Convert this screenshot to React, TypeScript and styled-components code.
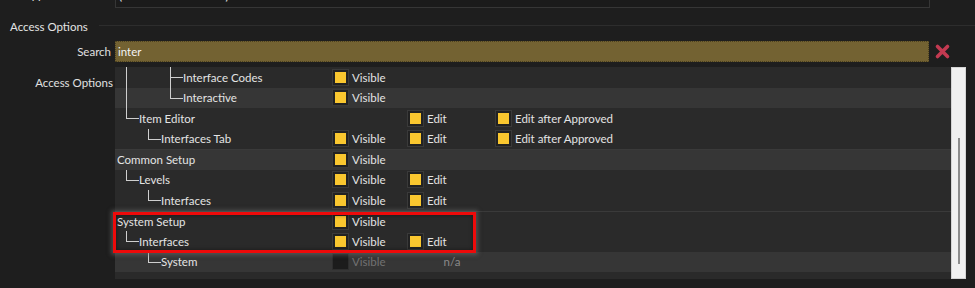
import React from 'react';
import styled, { createGlobalStyle, css } from 'styled-components';

const Global = createGlobalStyle`
  html, body { margin: 0; padding: 0; background: #1e1e1e; }
  body {
    font-family: Lato, "Noto Sans", sans-serif;
    font-size: 11.5px;
    color: #e4e4e4;
    overflow: hidden;
  }
`;

const Page = styled.div`
  width: 975px;
  height: 288px;
  overflow: hidden;
  background: #1e1e1e;
`;

const Form = styled.div`
  margin-top: -13px;
  display: flex;
  flex-direction: column;
`;

const FieldRow = styled.div<{ $mt?: number }>`
  display: grid;
  grid-template-columns: 115px auto;
  align-items: start;
  margin-top: ${(p) => p.$mt ?? 0}px;
`;

const Label = styled.div<{ $pt?: number; $pr?: number; $lh?: number }>`
  text-align: right;
  white-space: nowrap;
  padding-top: ${(p) => p.$pt ?? 0}px;
  padding-right: ${(p) => p.$pr ?? 4}px;
  line-height: ${(p) => p.$lh ?? 21}px;
  color: #e0e0e0;
`;

const StoreInput = styled.div`
  box-sizing: border-box;
  width: 815px;
  height: 21px;
  line-height: 16px;
  padding-left: 3px;
  background: #1b1b1b;
  border: 1px solid #363636;
  color: #e8e8e8;
`;

const SectionHeader = styled.div`
  display: flex;
  align-items: flex-start;
  margin-top: 12px;
  padding-left: 10px;
  gap: 11px;
`;

const SectionTitle = styled.div`
  line-height: 14px;
  color: #e4e4e4;
`;

const SectionRule = styled.div`
  flex: 1;
  height: 1px;
  margin-top: 5px;
  background: #2d2d2d;
`;

const SearchWrap = styled.div`
  display: flex;
  align-items: center;
  gap: 5px;
`;

const SearchInput = styled.div`
  box-sizing: border-box;
  width: 814px;
  height: 21px;
  line-height: 19px;
  padding-left: 2px;
  background: #736232;
  border: 1px dotted #4c411f;
  color: #f4f4f4;
`;

const ClearButton = styled.div`
  width: 17px;
  height: 17px;
  display: flex;
  align-items: center;
  justify-content: center;
`;

const TreeBox = styled.div`
  display: flex;
  width: 851px;
`;

const TreeContent = styled.div`
  position: relative;
  width: 836px;
  background: #2a2a2a;
  padding-bottom: 7px;
`;

const Scrollbar = styled.div`
  box-sizing: border-box;
  width: 15px;
  background: #f0f0f0;
  border: 1px solid #d4d4d4;
  padding-top: 70px;
  display: flex;
  justify-content: center;
`;

const ScrollThumb = styled.div`
  width: 2px;
  height: 126px;
  background: #8c8c8c;
`;

const Row = styled.div<{ $light?: boolean; $sep?: boolean }>`
  box-sizing: border-box;
  height: 20.5px;
  display: flex;
  align-items: center;
  background: ${(p) => (p.$light ? '#363636' : '#2a2a2a')};
  ${(p) =>
    p.$sep &&
    css`
      border-top: 1px solid #3a3a3a;
    `}
`;

const TreeCell = styled.div`
  width: 218px;
  height: 100%;
  box-sizing: border-box;
  padding-left: 2px;
  display: flex;
  align-items: stretch;
`;

type GuideKind = 'none' | 'pipe' | 'elbow' | 'tee';

const Guide = styled.div<{ $kind: GuideKind }>`
  position: relative;
  width: 22px;
  flex: none;
  &::before,
  &::after {
    content: '';
    position: absolute;
    background: #cfcfcf;
    display: none;
  }
  &::before {
    left: 9px;
    top: 0;
    width: 1px;
  }
  &::after {
    left: 9px;
    top: 50%;
    width: 13px;
    height: 1px;
  }
  ${(p) =>
    p.$kind === 'pipe' &&
    css`
      &::before { display: block; bottom: 0; }
    `}
  ${(p) =>
    p.$kind === 'tee' &&
    css`
      &::before { display: block; bottom: 0; }
      &::after { display: block; }
    `}
  ${(p) =>
    p.$kind === 'elbow' &&
    css`
      &::before { display: block; height: 50%; }
      &::after { display: block; }
    `}
`;

const NodeLabel = styled.div`
  display: flex;
  align-items: center;
  white-space: nowrap;
  color: #e4e4e4;
`;

const PermCell = styled.div<{ $w: number }>`
  width: ${(p) => p.$w}px;
  flex: none;
  display: flex;
  align-items: center;
  gap: 4px;
  white-space: nowrap;
`;

const Check = styled.div<{ $disabled?: boolean }>`
  width: 11px;
  height: 11px;
  flex: none;
  border: 2px solid ${(p) => (p.$disabled ? '#1c1c1c' : '#222222')};
  background: ${(p) => (p.$disabled ? '#1c1c1c' : '#fac72f')};
  box-shadow: 0 0 0 1px ${(p) => (p.$disabled ? '#2e2e2e' : '#3a3a3a')};
`;

const PermText = styled.span<{ $disabled?: boolean }>`
  color: ${(p) => (p.$disabled ? '#727272' : '#e4e4e4')};
`;

const NotApplicable = styled.div`
  width: 88px;
  text-align: center;
  color: #8a8a8a;
`;

const Highlight = styled.div`
  position: absolute;
  left: -2px;
  top: 145px;
  width: 363px;
  height: 41px;
  box-sizing: border-box;
  border: 3px solid #ee0a0a;
  box-shadow: 0 0 4px 2px rgba(110, 110, 110, 0.55), inset 0 0 4px rgba(0, 0, 0, 0.45);
  pointer-events: none;
`;

type Perm = 'visible' | 'edit' | 'approved' | 'empty' | 'visibleOff' | 'na';

type Node = {
  label: string;
  guides: GuideKind[];
  perms: Perm[];
  light?: boolean;
  sep?: boolean;
};

const nodes: Node[] = [
  { label: 'Interface Codes', guides: ['pipe', 'none', 'tee'], perms: ['visible'] },
  { label: 'Interactive', guides: ['pipe', 'none', 'elbow'], perms: ['visible'], light: true },
  { label: 'Item Editor', guides: ['elbow'], perms: ['empty', 'edit', 'approved'] },
  { label: 'Interfaces Tab', guides: ['none', 'elbow'], perms: ['visible', 'edit', 'approved'] },
  { label: 'Common Setup', guides: [], perms: ['visible'], light: true, sep: true },
  { label: 'Levels', guides: ['elbow'], perms: ['visible', 'edit'] },
  { label: 'Interfaces', guides: ['none', 'elbow'], perms: ['visible', 'edit'] },
  { label: 'System Setup', guides: [], perms: ['visible'], sep: true },
  { label: 'Interfaces', guides: ['elbow'], perms: ['visible', 'edit'] },
  { label: 'System', guides: ['none', 'elbow'], perms: ['visibleOff', 'na'], light: true },
];

const widths = [75, 88, 130];

const PermView = ({ perm, w }: { perm: Perm; w: number }) => {
  switch (perm) {
    case 'empty':
      return <PermCell $w={w} />;
    case 'na':
      return <NotApplicable>n/a</NotApplicable>;
    case 'visibleOff':
      return (
        <PermCell $w={w}>
          <Check $disabled />
          <PermText $disabled>Visible</PermText>
        </PermCell>
      );
    default: {
      const text = perm === 'visible' ? 'Visible' : perm === 'edit' ? 'Edit' : 'Edit after Approved';
      return (
        <PermCell $w={w}>
          <Check />
          <PermText>{text}</PermText>
        </PermCell>
      );
    }
  }
};

const ClearIcon = () => (
  <svg width="17" height="17" viewBox="0 0 17 17">
    <path d="M3.5 3.5 L13.5 13.5 M13.5 3.5 L3.5 13.5" stroke="#c33a51" strokeWidth="3.6" strokeLinecap="round" />
  </svg>
);

export default function App() {
  return (
    <Page>
      <Global />
      <Form>
        <FieldRow>
          <Label $lh={16}>Applicable Stores</Label>
          <StoreInput>(All 7 Stores Selected)</StoreInput>
        </FieldRow>

        <SectionHeader>
          <SectionTitle>Access Options</SectionTitle>
          <SectionRule />
        </SectionHeader>

        <FieldRow $mt={7}>
          <Label>Search</Label>
          <SearchWrap>
            <SearchInput>inter</SearchInput>
            <ClearButton>
              <ClearIcon />
            </ClearButton>
          </SearchWrap>
        </FieldRow>

        <FieldRow $mt={5}>
          <Label $pt={8} $pr={2} $lh={16}>Access Options</Label>
          <TreeBox>
            <TreeContent>
              {nodes.map((n, i) => (
                <Row key={i} $light={n.light} $sep={n.sep}>
                  <TreeCell>
                    {n.guides.map((g, j) => (
                      <Guide key={j} $kind={g} />
                    ))}
                    <NodeLabel>{n.label}</NodeLabel>
                  </TreeCell>
                  {n.perms.map((p, j) => (
                    <PermView key={j} perm={p} w={widths[j]} />
                  ))}
                </Row>
              ))}
              <Highlight />
            </TreeContent>
            <Scrollbar>
              <ScrollThumb />
            </Scrollbar>
          </TreeBox>
        </FieldRow>
      </Form>
    </Page>
  );
}
